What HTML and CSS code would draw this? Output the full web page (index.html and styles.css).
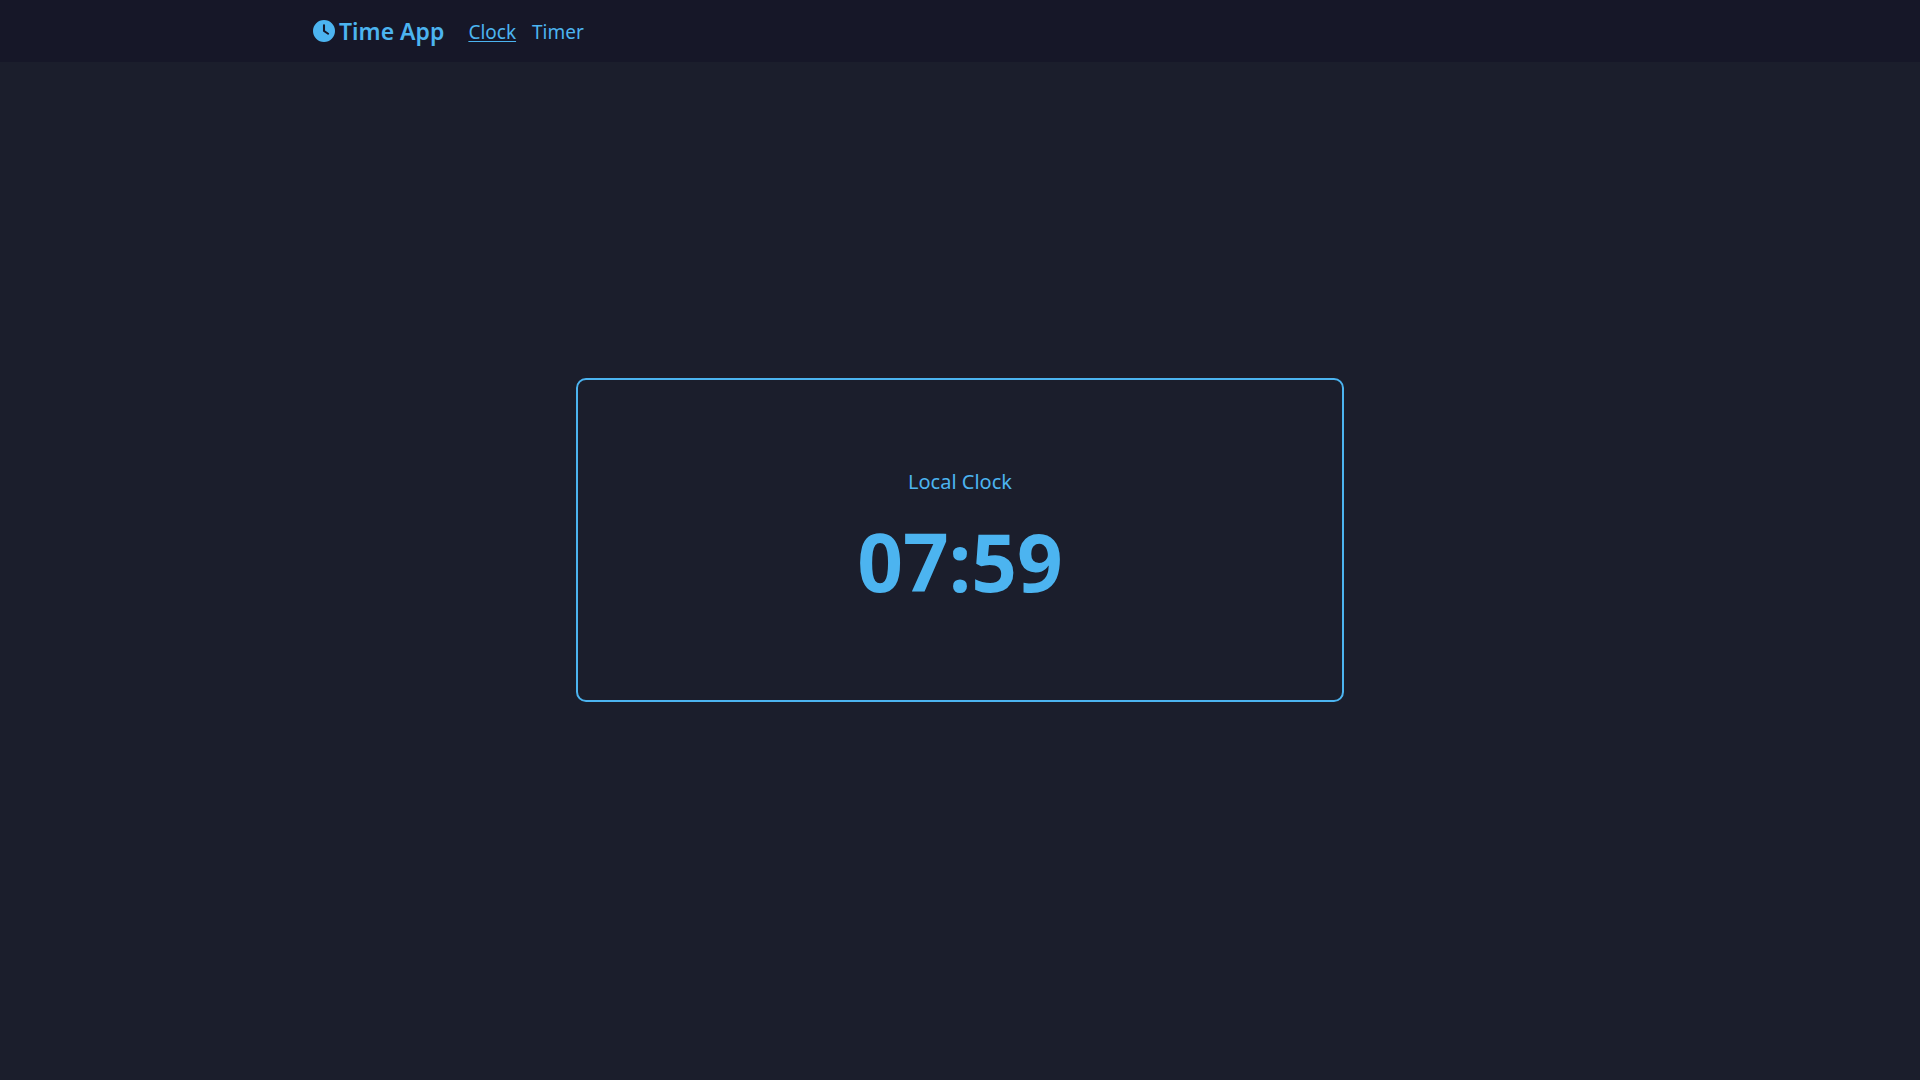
FILE: index.html
```html
<!DOCTYPE html>
<html lang="en">
<head>
<meta charset="utf-8">
<meta name="viewport" content="width=device-width, initial-scale=1">
<title>Time App</title>
<link rel="stylesheet" href="styles.css">
</head>
<body>
<header class="navbar">
  <div class="container">
    <a class="brand" href="#">
      <svg class="brand-icon" viewBox="0 0 512 512" aria-hidden="true"><path fill="currentColor" d="M256 0a256 256 0 1 1 0 512A256 256 0 1 1 256 0zM232 120V256c0 8 4 15.500 10.700 20l96 64c11 7.400 25.900 4.400 33.300-6.700s4.400-25.900-6.700-33.300L280 243.200V120c0-13.300-10.700-24-24-24s-24 10.700-24 24z"/></svg>
      <span>Time App</span>
    </a>
    <nav class="links">
      <a class="link active" href="#clock" aria-current="page">Clock</a>
      <a class="link" href="#timer">Timer</a>
    </nav>
  </div>
</header>
<main class="main">
  <section class="card" id="clock">
    <h1 class="title">Local Clock</h1>
    <time class="time" datetime="07:59">07:59</time>
  </section>
</main>
</body>
</html>
```
FILE: styles.css
```css
* {
  box-sizing: border-box;
}

body {
  margin: 0;
  min-height: 100vh;
  display: grid;
  background: #1b1e2c;
  color: #4cb4f0;
  font-family: "Noto Sans", sans-serif;
  font-size: 20px;
  line-height: 30px;
}

.navbar {
  grid-area: 1 / 1;
  align-self: start;
  padding: 16px 0;
  background: #161728;
}

.container {
  display: flex;
  align-items: center;
  gap: 24px;
  max-width: 1320px;
  margin: 0 auto;
  padding: 0 13px;
}

.brand {
  display: flex;
  align-items: center;
  gap: 4px;
  color: inherit;
  font-size: 23px;
  font-weight: 600;
  text-decoration: none;
}

.brand-icon {
  width: 22px;
  height: 22px;
}

.links {
  display: flex;
  gap: 16px;
  padding-top: 2px;
  font-size: 19px;
  line-height: 28px;
}

.link {
  color: inherit;
  text-decoration: none;
}

.link.active {
  text-decoration: underline 1px;
  text-underline-offset: 2px;
}

.main {
  grid-area: 1 / 1;
  display: grid;
  place-items: center;
}

.card {
  display: flex;
  flex-direction: column;
  align-items: center;
  justify-content: center;
  gap: 4px;
  width: 40%;
  min-height: 30vh;
  padding-top: 8px;
  border: 2px solid currentColor;
  border-radius: 10px;
}

.title {
  margin: 0;
  font-size: 20px;
  font-weight: 400;
}

.time {
  font-size: 80px;
  font-weight: 700;
  line-height: 120px;
}
```
